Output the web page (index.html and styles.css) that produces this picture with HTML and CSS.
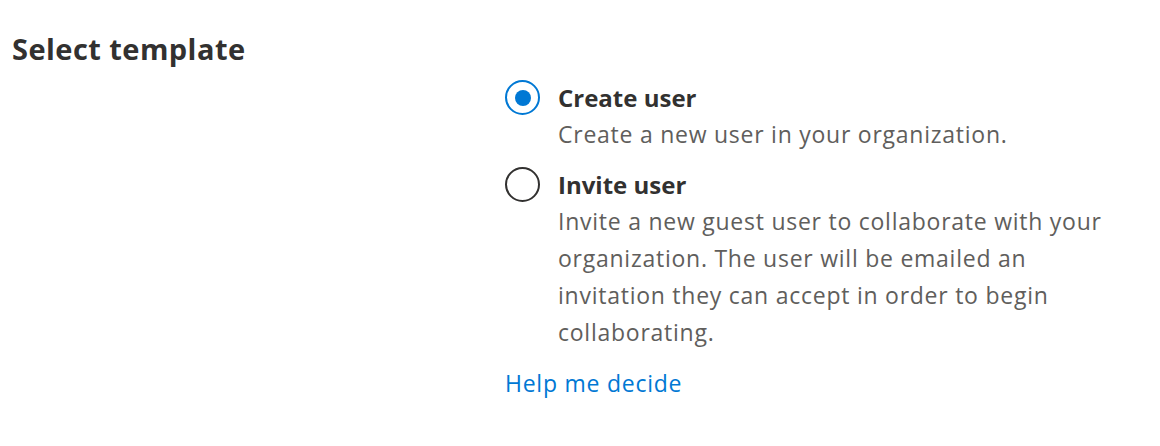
FILE: index.html
```html
<!DOCTYPE html>
<html lang="en">
<head>
<meta charset="utf-8">
<title>Select template</title>
<link rel="stylesheet" href="styles.css">
</head>
<body>
<main class="page">
  <h2 class="title">Select template</h2>
  <div class="options" role="radiogroup">
    <div class="option">
      <span class="radio radio-checked"><span class="radio-dot"></span></span>
      <div class="option-text">
        <div class="option-label">Create user</div>
        <div class="option-desc">Create a new user in your organization.</div>
      </div>
    </div>
    <div class="option">
      <span class="radio"></span>
      <div class="option-text">
        <div class="option-label">Invite user</div>
        <div class="option-desc">Invite a new guest user to collaborate with your organization. The user will be emailed an invitation they can accept in order to begin collaborating.</div>
      </div>
    </div>
    <a class="help-link" href="#">Help me decide</a>
  </div>
</main>
</body>
</html>
```

FILE: styles.css
```css
html, body {
  margin: 0;
  padding: 0;
  background: #ffffff;
}

body {
  font-family: "Open Sans", "Noto Sans", "Liberation Sans", sans-serif;
  color: #323130;
}

.page {
  padding: 29px 12px 0 12px;
}

.title {
  margin: 0;
  font-size: 29px;
  line-height: 40px;
  letter-spacing: 0.45px;
  font-weight: 700;
  color: #323130;
}

.options {
  margin-left: 493px;
  margin-top: 11px;
  display: flex;
  flex-direction: column;
  gap: 14px;
}

.option {
  display: flex;
  align-items: flex-start;
  gap: 18px;
}

.radio {
  flex: none;
  box-sizing: border-box;
  width: 35px;
  height: 35px;
  border: 2px solid #323130;
  border-radius: 50%;
  display: flex;
  align-items: center;
  justify-content: center;
}

.radio-checked {
  border-color: #0078d4;
}

.radio-dot {
  width: 16px;
  height: 16px;
  border-radius: 50%;
  background: #0078d4;
}

.option-text {
  width: 563px;
}

.option-label {
  font-size: 24px;
  line-height: 36px;
  font-weight: 700;
  color: #323130;
}

.option-desc {
  font-size: 23px;
  line-height: 37px;
  letter-spacing: 0.75px;
  color: #605e5c;
}

.help-link {
  align-self: flex-start;
  font-size: 23px;
  line-height: 36px;
  letter-spacing: 0.75px;
  color: #0078d4;
  text-decoration: none;
}
```
